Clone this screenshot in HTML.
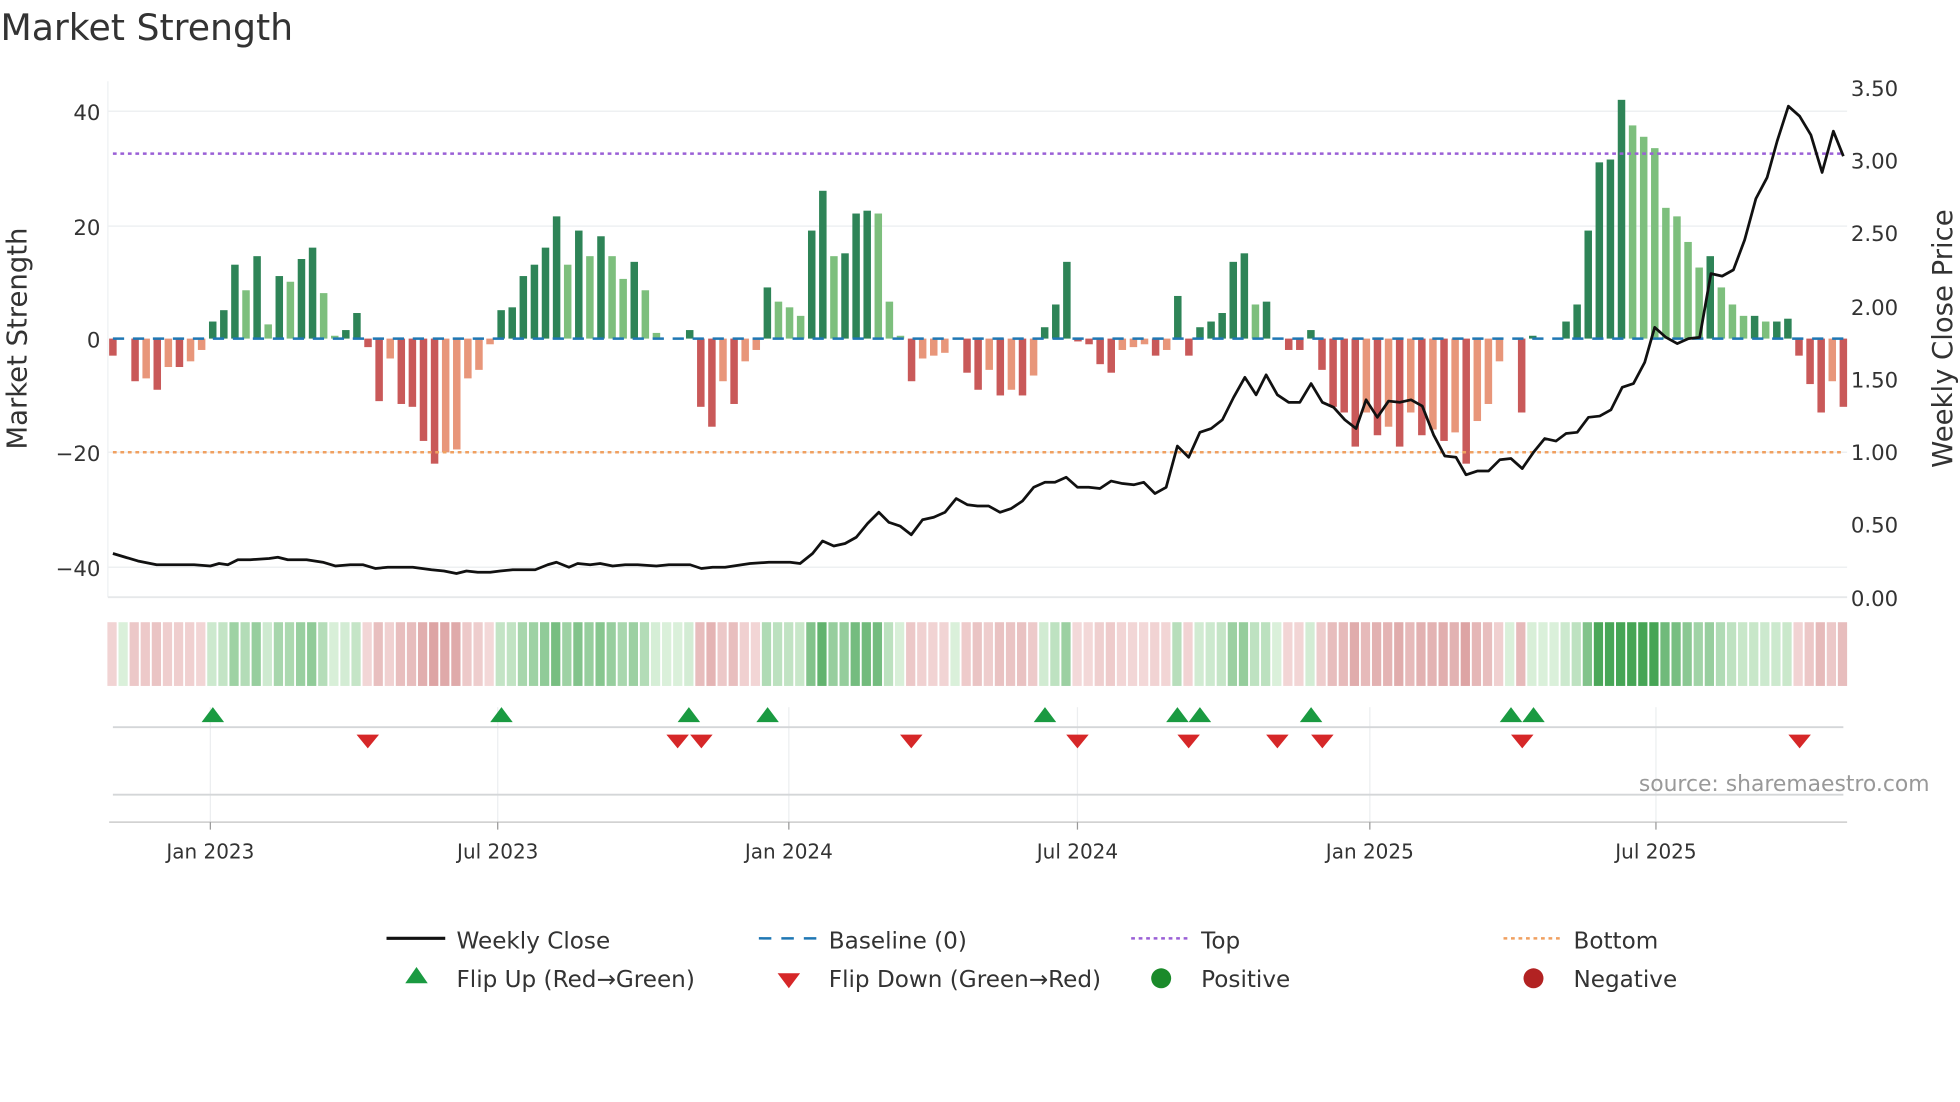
<!DOCTYPE html>
<html><head><meta charset="utf-8"><style>
html,body{margin:0;padding:0;background:#fff;}
svg{display:block;font-family:"DejaVu Sans","Liberation Sans",sans-serif;}
</style></head><body>
<svg id="c" width="1960" height="1102" viewBox="0 0 1568 882" xmlns="http://www.w3.org/2000/svg">
<rect width="1568" height="882" fill="#fff"/>
<text x="0" y="32" font-size="29" fill="#333">Market Strength</text>
<g stroke="#eef0f2" stroke-width="1.2">
<line x1="86" y1="89" x2="1478" y2="89"/><line x1="86" y1="181" x2="1478" y2="181"/>
<line x1="86" y1="362" x2="1478" y2="362"/><line x1="86" y1="454" x2="1478" y2="454"/>
</g>
<line x1="86" y1="65" x2="86" y2="478" stroke="#eef0f2"/>
<line x1="86" y1="478" x2="1478" y2="478" stroke="#e6e8ea" stroke-width="1.5"/>
<g font-size="17" fill="#333" text-anchor="end">
<text x="80" y="96">40</text><text x="80" y="188">20</text><text x="80" y="278">0</text>
<text x="80" y="369">−20</text><text x="80" y="461">−40</text>
</g>
<g font-size="17" fill="#333">
<text x="1481" y="77">3.50</text><text x="1481" y="135">3.00</text><text x="1481" y="193">2.50</text>
<text x="1481" y="252">2.00</text><text x="1481" y="310">1.50</text><text x="1481" y="368">1.00</text>
<text x="1481" y="426">0.50</text><text x="1481" y="485">0.00</text>
</g>
<text transform="translate(21,271) rotate(-90)" font-size="22" fill="#333" text-anchor="middle">Market Strength</text>
<text transform="translate(1562,271) rotate(-90)" font-size="22" fill="#333" text-anchor="middle">Weekly Close Price</text>
<g id="bars"></g>
<line x1="90" y1="271" x2="1475" y2="271" stroke="#1f77b4" stroke-width="2" stroke-dasharray="9,7"/>
<line x1="90" y1="123" x2="1475" y2="123" stroke="#9a5fd6" stroke-width="2" stroke-dasharray="3,3"/>
<line x1="90" y1="362" x2="1475" y2="362" stroke="#f0a060" stroke-width="2" stroke-dasharray="3,3"/>
<polyline id="price" fill="none" stroke="#111" stroke-width="2.2" stroke-linejoin="round"/>
<g id="heat"></g>
<g stroke="#eceef0" stroke-width="1">
<line x1="168" y1="566" x2="168" y2="658"/><line x1="398" y1="566" x2="398" y2="658"/>
<line x1="631" y1="566" x2="631" y2="658"/><line x1="862" y1="566" x2="862" y2="658"/>
<line x1="1096" y1="566" x2="1096" y2="658"/><line x1="1325" y1="566" x2="1325" y2="658"/>
</g>
<line x1="90" y1="582" x2="1475" y2="582" stroke="#d4d6d8" stroke-width="1.5"/>
<line x1="90" y1="636" x2="1475" y2="636" stroke="#d4d6d8" stroke-width="1.5"/>
<line x1="87" y1="658" x2="1478" y2="658" stroke="#ccc" stroke-width="1.2"/>
<g stroke="#999"><line x1="168" y1="658" x2="168" y2="664"/><line x1="398" y1="658" x2="398" y2="664"/><line x1="631" y1="658" x2="631" y2="664"/><line x1="862" y1="658" x2="862" y2="664"/><line x1="1096" y1="658" x2="1096" y2="664"/><line x1="1325" y1="658" x2="1325" y2="664"/></g>
<g id="marks"></g>
<text x="1544" y="633" font-size="17.5" fill="#999" text-anchor="end">source: sharemaestro.com</text>
<g font-size="16" fill="#333" text-anchor="middle">
<text x="168" y="687">Jan 2023</text><text x="398" y="687">Jul 2023</text><text x="631" y="687">Jan 2024</text>
<text x="862" y="687">Jul 2024</text><text x="1096" y="687">Jan 2025</text><text x="1325" y="687">Jul 2025</text>
</g>
<g font-size="18.5" fill="#333">
<line x1="309" y1="751" x2="356" y2="751" stroke="#111" stroke-width="2.5"/><text x="365" y="759">Weekly Close</text>
<line x1="607" y1="751" x2="654" y2="751" stroke="#1f77b4" stroke-width="2" stroke-dasharray="10,8"/><text x="663" y="759">Baseline (0)</text>
<line x1="905" y1="751" x2="950" y2="751" stroke="#9a5fd6" stroke-width="2" stroke-dasharray="3,3"/><text x="961" y="759">Top</text>
<line x1="1203" y1="751" x2="1248" y2="751" stroke="#f0a060" stroke-width="2" stroke-dasharray="3,3"/><text x="1259" y="759">Bottom</text>
<polygon points="333,774 342,787 324,787" fill="#1a9a41"/><text x="365" y="790">Flip Up (Red→Green)</text>
<polygon points="622,779 640,779 631,791" fill="#d62728"/><text x="663" y="790">Flip Down (Green→Red)</text>
<circle cx="929" cy="783" r="8" fill="#1a8a2a"/><text x="961" y="790">Positive</text>
<circle cx="1227" cy="783" r="8" fill="#b22222"/><text x="1259" y="790">Negative</text>
</g>
</svg>
<script>
var v=[-3,0,-7.5,-7,-9,-5,-5,-4,-2,3,5,13,8.5,14.5,2.5,11,10,14,16,8,0.5,1.5,4.5,-1.5,-11,-3.5,-11.5,-12,-18,-22,-20,-19.5,-7,-5.5,-1,5,5.5,11,13,16,21.5,13,19,14.5,18,14.5,10.5,13.5,8.5,1,0,0,1.5,-12,-15.5,-7.5,-11.5,-4,-2,9,6.5,5.5,4,19,26,14.5,15,22,22.5,22,6.5,0.5,-7.5,-3.5,-3,-2.5,0,-6,-9,-5.5,-10,-9,-10,-6.5,2,6,13.5,-0.5,-1,-4.5,-6,-2,-1.5,-1,-3,-2,7.5,-3,2,3,4.5,13.5,15,6,6.5,0,-2,-2,1.5,-5.5,-12,-13,-19,-13,-17,-15.5,-19,-13,-17,-16,-18,-16.5,-22,-14.5,-11.5,-4,0,-13,0.5,0,0,3,6,19,31,31.5,42,37.5,35.5,33.5,23,21.5,17,12.5,14.5,9,6,4,4,3,3,3.5,-3,-8,-13,-7.5,-12];
var NS="http://www.w3.org/2000/svg",n=v.length,step=(1475-90)/(n-1);
function el(t,a,p){var e=document.createElementNS(NS,t);for(var k in a)e.setAttribute(k,a[k]);document.getElementById(p).appendChild(e);}
for(var i=0;i<n;i++){var x=90+i*step,val=v[i],pr=i>0?v[i-1]:0,c;
 if(val>=0)c=(val>=pr)?"#2e8457":"#7dbf7d";else c=(val<=pr)?"#c95959":"#e8967a";
 var h=Math.abs(val)*4.55;if(h>0.3)el("rect",{x:x-3,y:val>=0?271-h:271,width:6,height:h,fill:c},"bars");
 var a=Math.min(1,Math.abs(val)/32),col;
 if(val>=0){var r=Math.round(218-(218-70)*a),g=Math.round(240-(240-165)*a),b=Math.round(218-(218-85)*a);col="rgb("+r+","+g+","+b+")";}
 else{var r=Math.round(244-(244-210)*a),g=Math.round(218-(218-140)*a),b=Math.round(218-(218-140)*a);col="rgb("+r+","+g+","+b+")";}
 el("rect",{x:x-4.4,y:498,width:7.4,height:51,fill:col},"heat");}
var p=[[90,443],[100,446],[110,449],[125,452],[140,452],[155,452],[168,453],[175,451],[182,452],[190,448],[200,448],[215,447],[222,446],[230,448],[245,448],[258,450],[268,453],[280,452],[290,452],[300,455],[310,454],[330,454],[345,456],[355,457],[365,459],[373,457],[382,458],[392,458],[400,457],[410,456],[428,456],[438,452],[445,450],[455,454],[462,451],[472,452],[480,451],[490,453],[500,452],[510,452],[525,453],[535,452],[552,452],[561,455],[570,454],[580,454],[600,451],[615,450],[632,450],[640,451],[650,443],[658,433],[667,437],[676,435],[685,430],[694,419],[703,410],[711,418],[720,421],[729,428],[738,416],[747,414],[756,410],[765,399],[774,404],[782,405],[791,405],[800,410],[809,407],[818,401],[827,390],[836,386],[844,386],[853,382],[862,390],[871,390],[880,391],[889,385],[898,387],[907,388],[915,386],[924,395],[933,390],[942,357],[951,366],[960,346],[969,343],[978,336],[987,318],[996,302],[1005,316],[1013,300],[1022,316],[1031,322],[1040,322],[1049,307],[1058,322],[1067,326],[1076,336],[1085,343],[1093,320],[1102,334],[1111,321],[1120,322],[1129,320],[1138,325],[1147,348],[1156,365],[1165,366],[1173,380],[1182,377],[1191,377],[1200,368],[1209,367],[1218,375],[1227,362],[1236,351],[1245,353],[1253,347],[1262,346],[1271,334],[1280,333],[1289,328],[1298,310],[1307,307],[1316,290],[1324,262],[1333,270],[1342,275],[1351,271],[1360,270],[1369,219],[1378,221],[1387,216],[1396,192],[1405,159],[1414,142],[1422,113],[1431,85],[1440,93],[1449,108],[1458,138],[1467,105],[1475,125]];
document.getElementById("price").setAttribute("points",p.map(function(q){return q.join(",")}).join(" "));
[170,401,551,614,836,942,960,1049,1209,1227].forEach(function(x){el("polygon",{points:x+",566 "+(x+9)+",578 "+(x-9)+",578",fill:"#1a9a41"},"marks");});
[294,542,561,729,862,951,1022,1058,1218,1440].forEach(function(x){el("polygon",{points:(x-9)+",588 "+(x+9)+",588 "+x+",599",fill:"#d62728"},"marks");});
</script>
</body></html>
